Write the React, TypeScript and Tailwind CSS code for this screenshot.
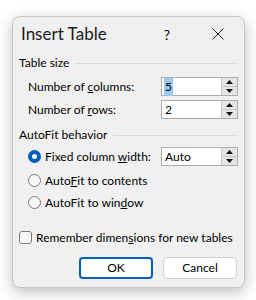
const font = { fontFamily: 'Lato, "Noto Sans", sans-serif' };

function Spin({ value, selected }: { value: string; selected?: boolean }) {
  return (
    <div className="flex h-[19px] w-[77px] border border-[#adadad] bg-white">
      <div className="flex flex-1 items-center pl-[2px] text-[12px] text-black">
        <span className={selected ? "bg-[#99c9ef] px-[1px]" : "px-[1px]"}>{value}</span>
      </div>
      <div className="flex w-[16px] flex-col border-l border-[#c8c8c8] bg-[#e5e5e5]">
        <div className="flex flex-1 items-center justify-center border-b border-[#c8c8c8]">
          <svg width="7" height="4" viewBox="0 0 7 4">
            <path d="M0 4 L3.5 0 L7 4 Z" fill="#111" />
          </svg>
        </div>
        <div className="flex flex-1 items-center justify-center">
          <svg width="7" height="4" viewBox="0 0 7 4">
            <path d="M0 0 L3.5 4 L7 0 Z" fill="#111" />
          </svg>
        </div>
      </div>
    </div>
  );
}

function Section({ title }: { title: string }) {
  return (
    <div className="flex h-[24px] items-center gap-[6px]">
      <span className="whitespace-nowrap text-[12px] text-black">{title}</span>
      <div className="h-px flex-1 bg-[#dadada]" />
    </div>
  );
}

function Radio({ checked, children }: { checked?: boolean; children: React.ReactNode }) {
  return (
    <div className="flex items-center gap-[4px]">
      {checked ? (
        <div className="flex h-[13px] w-[13px] items-center justify-center rounded-full bg-[#005fb8]">
          <div className="h-[5px] w-[5px] rounded-full bg-white" />
        </div>
      ) : (
        <div className="h-[13px] w-[13px] rounded-full border border-[#7a7a7a] bg-[#f7f7f7]" />
      )}
      <span className="whitespace-nowrap text-[12px] text-black">{children}</span>
    </div>
  );
}

export default function App() {
  return (
    <div className="h-[300px] w-[256px] bg-white pl-[12px] pt-[16px]" style={font}>
      <div className="flex h-[272px] w-[233px] flex-col rounded-[8px] border border-[#c5c5c5] bg-[#f0f0f0] shadow-[0_4px_14px_rgba(0,0,0,0.25)]">
        <div className="flex h-[34px] items-center pl-[8px]">
          <span className="whitespace-nowrap text-[17px] text-[#1a1a1a]">Insert Table</span>
          <span className="ml-auto mr-[42px] text-[14px] text-black">?</span>
          <svg width="12" height="12" viewBox="0 0 12 12" className="mr-[20px]">
            <path d="M0.5 0.5 L11.5 11.5 M11.5 0.5 L0.5 11.5" stroke="#222" strokeWidth="1" />
          </svg>
        </div>

        <div className="flex flex-col pl-[6px] pr-[6px]">
          <Section title="Table size" />
          <div className="mt-[2px] flex items-center justify-between pl-[9px]">
            <span className="whitespace-nowrap text-[12px] text-black">
              Number of <u>c</u>olumns:
            </span>
            <Spin value="5" selected />
          </div>
          <div className="mt-[4px] flex items-center justify-between pl-[9px]">
            <span className="whitespace-nowrap text-[12px] text-black">
              Number of <u>r</u>ows:
            </span>
            <Spin value="2" />
          </div>

          <div className="mt-[4px]">
            <Section title="AutoFit behavior" />
          </div>
          <div className="flex items-center justify-between pl-[9px]">
            <Radio checked>
              Fixed column <u>w</u>idth:
            </Radio>
            <Spin value="Auto" />
          </div>
          <div className="mt-[5px] flex h-[19px] items-center pl-[9px]">
            <Radio>
              Auto<u>F</u>it to contents
            </Radio>
          </div>
          <div className="mt-[3px] flex h-[19px] items-center pl-[9px]">
            <Radio>
              AutoFit to win<u>d</u>ow
            </Radio>
          </div>

          <div className="mt-[19px] flex h-[13px] items-center gap-[4px]">
            <div className="h-[13px] w-[13px] rounded-[3px] border border-[#7a7a7a] bg-[#f7f7f7]" />
            <span className="whitespace-nowrap text-[12px] text-black">
              Remember dimen<u>s</u>ions for new tables
            </span>
          </div>

          <div className="mt-[13px] flex justify-end gap-[10px] pr-[1px]">
            <button className="h-[22px] w-[74px] rounded-[4px] border-2 border-[#005fb8] bg-white text-[12px] text-black">
              OK
            </button>
            <button className="h-[22px] w-[74px] rounded-[4px] border border-[#d0d0d0] bg-white text-[12px] text-black">
              Cancel
            </button>
          </div>
        </div>
      </div>
    </div>
  );
}
